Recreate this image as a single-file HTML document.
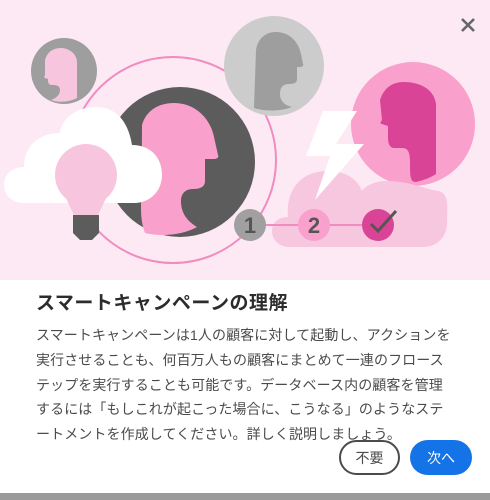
<!DOCTYPE html>
<html><head><meta charset="utf-8"><style>
body{margin:0;width:490px;height:500px;overflow:hidden;background:#fff;font-family:"Liberation Sans","Noto Sans CJK JP",sans-serif;position:relative}
.t{position:absolute;left:36px;top:288px;font-size:19px;font-weight:bold;color:#2c2c2c;letter-spacing:0.5px;margin:0}
.b{position:absolute;left:36px;top:323px;font-size:14px;line-height:24.8px;color:#4b4b4b;letter-spacing:0.1px;white-space:nowrap}
.btn{position:absolute;top:440px;height:35px;border-radius:18px;box-sizing:border-box;font-size:14px;display:flex;align-items:center;justify-content:center}
</style></head><body>
<svg width="490" height="280" style="position:absolute;left:0;top:0">
<rect width="490" height="280" fill="#fce9f4"/>
<path d="M462 19l12 12M474 19l-12 12" stroke="#666" stroke-width="2.6"/>
<circle cx="173" cy="160" r="103" fill="none" stroke="#f08cc0" stroke-width="2"/>
<circle cx="64" cy="71" r="33" fill="#9e9e9e"/>
<path d="M45 60c2-8 8-12 16-12 8 0 16 6 16 14v36c-8 4-18 5-26 2 6-2 9-6 9-10 0-4-3-5-8-5-4 0-4-3-4-6l-3-1c-1 0-1-1 0-3z" fill="#f8c5df"/>
<circle cx="180" cy="162" r="75" fill="#5c5c5c"/>
<path d="M142 125c4-14 16-22 32-22 20 0 36 14 40 34l4 18c1 2 0 3-3 4h-10v22c0 6-5 8-12 8-7 0-12 4-12 12 0 12 6 20 16 26-14 8-36 10-52 6-4-10-4-20-4-28 0-24 1-50 1-80z" fill="#f9a0cc"/>
<circle cx="274" cy="66" r="50" fill="#cccccc"/>
<path d="M256 50c2-12 10-18 20-18 12 0 22 8 25 22l2 10c1 1 0 2-2 3h-4v12c0 4-3 5-8 5-6 0-9 3-9 10 0 7 4 11 12 13-10 4-26 5-38 1z" fill="#9e9e9e"/>
<circle cx="413" cy="124" r="62" fill="#f9a0cc"/>
<path d="M380 100c4-12 12-18 24-18 14 0 30 6 32 22v70c-6 4-12 6-20 8-6 0-6-6-6-20 0-10-2-14-8-14h-8c-4 0-6-4-6-10v-12l-6-2c-2 0-2-1 0-4z" fill="#d94497"/>
<path d="M290 247c-12 0-18-8-18-16 0-8 6-14 16-14-2-24 10-46 40-46 20 0 30 10 34 20 4-6 14-10 24-10 24 0 38 8 52 10 12 2 9 18 9 32 0 14-10 24-24 24z" fill="#f7c6df"/>
<path d="M323 111h34l-21 33h28l-49 56 15-44h-24z" fill="#fff"/>
<path d="M24 203c-12 0-20-8-20-18 0-12 10-18 20-18 0-20 14-34 36-34 2-16 18-26 36-26 20 0 32 14 36 38 18 0 30 12 30 30 0 16-12 28-28 28z" fill="#fff"/>
<circle cx="86" cy="175" r="31" fill="#f8c5df"/>
<path d="M62 190l12 25h24l12-25z" fill="#f8c5df"/>
<path d="M73 215h26v18l-7 7h-12l-7-7z" fill="#5c5c5c"/>
<line x1="250" y1="225" x2="378" y2="225" stroke="#f08cc0" stroke-width="2"/>
<circle cx="250" cy="225" r="16" fill="#a0a0a0"/>
<text x="250" y="233" font-size="22" font-weight="bold" fill="#555" text-anchor="middle" font-family="Liberation Sans">1</text>
<circle cx="314" cy="225" r="16" fill="#f9a0cc"/>
<text x="314" y="233" font-size="22" font-weight="bold" fill="#555" text-anchor="middle" font-family="Liberation Sans">2</text>
<circle cx="378" cy="225" r="16" fill="#d94497"/>
<path d="M371 224l7 7 18-20" stroke="#555" stroke-width="3" fill="none"/>
</svg>
<h1 class="t">スマートキャンペーンの理解</h1>
<div class="b">スマートキャンペーンは1人の顧客に対して起動し、アクションを<br>実行させることも、何百万人もの顧客にまとめて一連のフロース<br>テップを実行することも可能です。データベース内の顧客を管理<br>するには「もしこれが起こった場合に、こうなる」のようなステ<br>ートメントを作成してください。詳しく説明しましょう。</div>
<div class="btn" style="left:339px;width:61px;border:2px solid #4b4b4b;color:#4b4b4b">不要</div>
<div class="btn" style="left:410px;width:62px;background:#1473e6;color:#fff">次へ</div>
<div style="position:absolute;left:0;top:493px;width:490px;height:7px;background:#9a9a9a"></div>
</body></html>
